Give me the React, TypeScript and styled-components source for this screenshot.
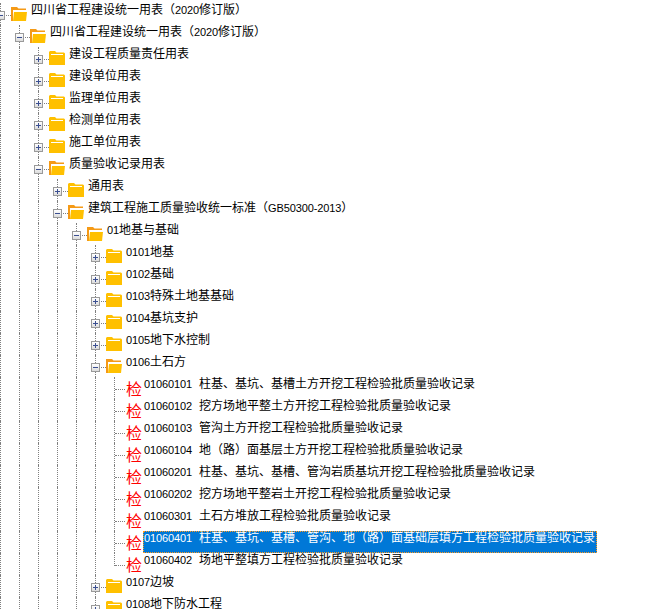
import React from "react";
import styled, { createGlobalStyle } from "styled-components";

const Global = createGlobalStyle`
  html, body { margin: 0; padding: 0; background: #fff; overflow: hidden; }
  #root { width: 648px; height: 609px; overflow: hidden; }
`;

const STEP = 19;

const Tree = styled.div`
  width: 648px;
  height: 609px;
  padding-top: 3px;
  box-sizing: border-box;
  overflow: hidden;
  font-family: "Noto Sans CJK SC", sans-serif;
  font-size: 12px;
  color: #000;
`;

const Row = styled.div`
  display: flex;
  height: 22px;
`;

const Guide = styled.div`
  flex: none;
  width: ${STEP}px;
  box-sizing: border-box;
  border-left: 1px dotted #808080;
`;

const Connector = styled.div<{ $last?: boolean }>`
  flex: none;
  position: relative;
  width: 11px;
  height: ${(p) => (p.$last ? "13px" : "22px")};
  box-sizing: border-box;
  border-left: 1px dotted #808080;
  &::after {
    content: "";
    position: absolute;
    left: 0;
    top: 12px;
    width: 10px;
    border-top: 1px dotted #808080;
  }
`;

const Expander = styled.div`
  position: absolute;
  z-index: 1;
  left: -5px;
  top: 8px;
  width: 9px;
  height: 9px;
  box-sizing: border-box;
  border: 1px solid #9a9a9a;
  background: linear-gradient(#ffffff, #dcdcdc);
  svg { display: block; }
`;

const FolderBox = styled.svg`
  flex: none;
  width: 16px;
  height: 16px;
  margin-top: 3px;
  margin-right: 4px;
  display: block;
`;

const CheckIcon = styled.span`
  flex: none;
  width: 18px;
  height: 20px;
  margin-top: 1px;
  margin-left: 1px;
  color: #ff0000;
  font-size: 16px;
  line-height: 20px;
`;

const Label = styled.div<{ $selected?: boolean }>`
  height: 22px;
  line-height: 11px;
  white-space: nowrap;
  word-spacing: 4px;
  box-sizing: border-box;
  color: ${(p) => (p.$selected ? "#fff" : "#000")};
  background: ${(p) => (p.$selected ? "#0078d7" : "transparent")};
  margin-left: ${(p) => (p.$selected ? "-1px" : "0")};
  padding-left: ${(p) => (p.$selected ? "1px" : "0")};
  padding-right: ${(p) => (p.$selected ? "2px" : "0")};
  outline: ${(p) => (p.$selected ? "1px dotted #ff9a1f" : "none")};
  outline-offset: -1px;
`;

const Latin = styled.span`
  font-family: "Liberation Sans", sans-serif;
  font-size: 11px;
  letter-spacing: -0.12px;
`;

function Mixed({ text }: { text: string }) {
  const parts = text.split(/([0-9A-Za-z\- ]+)/);
  return (
    <>
      {parts.map((p, i) => (i % 2 === 1 ? <Latin key={i}>{p}</Latin> : p))}
    </>
  );
}

function ExpanderBox({ open }: { open: boolean }) {
  return (
    <Expander>
      <svg width="7" height="7" viewBox="0 0 7 7">
        <rect x="1" y="3" width="5" height="1" fill="#3b4f91" />
        {!open && <rect x="3" y="1" width="1" height="5" fill="#3b4f91" />}
      </svg>
    </Expander>
  );
}

function Folder({ open }: { open: boolean }) {
  return open ? (
    <FolderBox viewBox="0 0 16 16">
      <path d="M0 1h6l1.500 1.500H15V4H2v11H0z" fill="#f59a16" />
      <path d="M2 4h13v2H4L2 14z" fill="#fff" />
      <path d="M3 6h13l-1 9H2z" fill="#ffc000" />
    </FolderBox>
  ) : (
    <FolderBox viewBox="0 0 16 16">
      <path d="M0 2L1 1h5l1.500 1.500H15l1 1V15H0z" fill="#ffc000" />
      <rect x="2" y="4" width="12" height="1" fill="#fff" />
    </FolderBox>
  );
}

type Node = { d: number; t: string; k: "open" | "closed" | "leaf"; last?: boolean; sel?: boolean };

const rows: Node[] = [
  { d: 0, t: "四川省工程建设统一用表（2020修订版）", k: "open" },
  { d: 1, t: "四川省工程建设统一用表（2020修订版）", k: "open" },
  { d: 2, t: "建设工程质量责任用表", k: "closed" },
  { d: 2, t: "建设单位用表", k: "closed" },
  { d: 2, t: "监理单位用表", k: "closed" },
  { d: 2, t: "检测单位用表", k: "closed" },
  { d: 2, t: "施工单位用表", k: "closed" },
  { d: 2, t: "质量验收记录用表", k: "open" },
  { d: 3, t: "通用表", k: "closed" },
  { d: 3, t: "建筑工程施工质量验收统一标准（GB50300-2013）", k: "open" },
  { d: 4, t: "01地基与基础", k: "open" },
  { d: 5, t: "0101地基", k: "closed" },
  { d: 5, t: "0102基础", k: "closed" },
  { d: 5, t: "0103特殊土地基基础", k: "closed" },
  { d: 5, t: "0104基坑支护", k: "closed" },
  { d: 5, t: "0105地下水控制", k: "closed" },
  { d: 5, t: "0106土石方", k: "open" },
  { d: 6, t: "01060101 柱基、基坑、基槽土方开挖工程检验批质量验收记录", k: "leaf" },
  { d: 6, t: "01060102 挖方场地平整土方开挖工程检验批质量验收记录", k: "leaf" },
  { d: 6, t: "01060103 管沟土方开挖工程检验批质量验收记录", k: "leaf" },
  { d: 6, t: "01060104 地（路）面基层土方开挖工程检验批质量验收记录", k: "leaf" },
  { d: 6, t: "01060201 柱基、基坑、基槽、管沟岩质基坑开挖工程检验批质量验收记录", k: "leaf" },
  { d: 6, t: "01060202 挖方场地平整岩土开挖工程检验批质量验收记录", k: "leaf" },
  { d: 6, t: "01060301 土石方堆放工程检验批质量验收记录", k: "leaf" },
  { d: 6, t: "01060401 柱基、基坑、基槽、管沟、地（路）面基础层填方工程检验批质量验收记录", k: "leaf", sel: true },
  { d: 6, t: "01060402 场地平整填方工程检验批质量验收记录", k: "leaf", last: true },
  { d: 5, t: "0107边坡", k: "closed" },
  { d: 5, t: "0108地下防水工程", k: "closed" },
];

export default function App() {
  return (
    <>
      <Global />
      <Tree>
        {rows.map((r, i) => (
          <Row key={i}>
            {Array.from({ length: r.d }, (_, g) => (
              <Guide key={g} />
            ))}
            <Connector $last={r.last}>{r.k !== "leaf" && <ExpanderBox open={r.k === "open"} />}</Connector>
            {r.k === "leaf" ? <CheckIcon>检</CheckIcon> : <Folder open={r.k === "open"} />}
            <Label $selected={r.sel}>
              <Mixed text={r.t} />
            </Label>
          </Row>
        ))}
      </Tree>
    </>
  );
}
